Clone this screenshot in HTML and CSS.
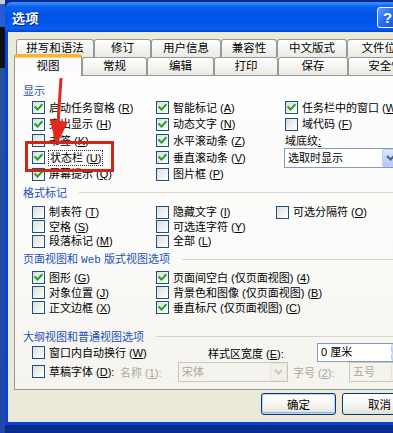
FILE: index.html
```html
<!DOCTYPE html>
<html lang="zh-CN">
<head>
<meta charset="utf-8">
<title>选项</title>
<link rel="stylesheet" href="styles.css">
</head>
<body>
<div class="screen">
  <div class="desk"></div>
  <div class="window">
    <div class="titlebar">
      <span class="title">选项</span>
      <span class="tbtn help">?</span>
      <span class="tbtn close">×</span>
    </div>
    <div class="client">
      <div class="tabs">
        <div class="tabrow back">
          <span class="tab b1">拼写和语法</span>
          <span class="tab b2">修订</span>
          <span class="tab b3">用户信息</span>
          <span class="tab b4">兼容性</span>
          <span class="tab b5">中文版式</span>
          <span class="tab b6">文件位置</span>
        </div>
        <div class="tabrow front">
          <span class="tab sel f1">视图</span>
          <span class="tab f2">常规</span>
          <span class="tab f3">编辑</span>
          <span class="tab f4">打印</span>
          <span class="tab f5">保存</span>
          <span class="tab f6">安全性</span>
        </div>
      </div>

      <div class="panel">
        <div class="hdr s1h"><span>显示</span></div>
        <div class="grid g1">
          <label class="item"><span class="cb on"><svg viewBox="0 0 11 11"><path d="M2.3 5.2l2.2 2.4 4.2-4.6"/></svg></span><span>启动任务窗格 (<u>R</u>)</span></label>
          <label class="item"><span class="cb on"><svg viewBox="0 0 11 11"><path d="M2.3 5.2l2.2 2.4 4.2-4.6"/></svg></span><span>智能标记 (<u>A</u>)</span></label>
          <label class="item"><span class="cb on"><svg viewBox="0 0 11 11"><path d="M2.3 5.2l2.2 2.4 4.2-4.6"/></svg></span><span>任务栏中的窗口 (<u>W</u>)</span></label>

          <label class="item"><span class="cb on"><svg viewBox="0 0 11 11"><path d="M2.3 5.2l2.2 2.4 4.2-4.6"/></svg></span><span>突出显示 (<u>H</u>)</span></label>
          <label class="item"><span class="cb on"><svg viewBox="0 0 11 11"><path d="M2.3 5.2l2.2 2.4 4.2-4.6"/></svg></span><span>动态文字 (<u>N</u>)</span></label>
          <label class="item"><span class="cb"></span><span>域代码 (<u>F</u>)</span></label>

          <label class="item"><span class="cb"></span><span>书签 (<u>K</u>)</span></label>
          <label class="item"><span class="cb on"><svg viewBox="0 0 11 11"><path d="M2.3 5.2l2.2 2.4 4.2-4.6"/></svg></span><span>水平滚动条 (<u>Z</u>)</span></label>
          <span class="item"><span>域底纹<u>:</u></span></span>

          <label class="item"><span class="cb on"><svg viewBox="0 0 11 11"><path d="M2.3 5.2l2.2 2.4 4.2-4.6"/></svg></span><span class="focus">状态栏 (<u>U</u>)</span></label>
          <label class="item"><span class="cb on"><svg viewBox="0 0 11 11"><path d="M2.3 5.2l2.2 2.4 4.2-4.6"/></svg></span><span>垂直滚动条 (<u>V</u>)</span></label>
          <div class="item">
            <div class="combo wide"><span class="val">选取时显示</span><span class="arrow"><svg viewBox="0 0 9 6"><path d="M1 1l3.5 3.5L8 1"/></svg></span></div>
          </div>

          <label class="item"><span class="cb on"><svg viewBox="0 0 11 11"><path d="M2.3 5.2l2.2 2.4 4.2-4.6"/></svg></span><span>屏幕提示 (<u>Q</u>)</span></label>
          <label class="item"><span class="cb"></span><span>图片框 (<u>P</u>)</span></label>
          <span class="item"></span>
        </div>

        <div class="hdr line s2h"><span>格式标记</span></div>
        <div class="grid g2">
          <label class="item"><span class="cb"></span><span>制表符 (<u>T</u>)</span></label>
          <label class="item"><span class="cb"></span><span>隐藏文字 (<u>I</u>)</span></label>
          <label class="item"><span class="cb"></span><span>可选分隔符 (<u>O</u>)</span></label>
          <label class="item"><span class="cb"></span><span>空格 (<u>S</u>)</span></label>
          <label class="item"><span class="cb"></span><span>可选连字符 (<u>Y</u>)</span></label>
          <span class="item"></span>
          <label class="item"><span class="cb"></span><span>段落标记 (<u>M</u>)</span></label>
          <label class="item"><span class="cb"></span><span>全部 (<u>L</u>)</span></label>
          <span class="item"></span>
        </div>

        <div class="hdr line s3h"><span>页面视图和 <span class="mono">Web</span> 版式视图选项</span></div>
        <div class="grid g3">
          <label class="item"><span class="cb on"><svg viewBox="0 0 11 11"><path d="M2.3 5.2l2.2 2.4 4.2-4.6"/></svg></span><span>图形 (<u>G</u>)</span></label>
          <label class="item"><span class="cb on"><svg viewBox="0 0 11 11"><path d="M2.3 5.2l2.2 2.4 4.2-4.6"/></svg></span><span>页面间空白 (仅页面视图) (<u>4</u>)</span></label>
          <label class="item"><span class="cb"></span><span>对象位置 (<u>J</u>)</span></label>
          <label class="item"><span class="cb"></span><span>背景色和图像 (仅页面视图) (<u>B</u>)</span></label>
          <label class="item"><span class="cb"></span><span>正文边框 (<u>X</u>)</span></label>
          <label class="item"><span class="cb on"><svg viewBox="0 0 11 11"><path d="M2.3 5.2l2.2 2.4 4.2-4.6"/></svg></span><span>垂直标尺 (仅页面视图) (<u>C</u>)</span></label>
        </div>

        <div class="hdr line s4h"><span>大纲视图和普通视图选项</span></div>
        <div class="row r1">
          <label class="item w-wrap"><span class="cb"></span><span>窗口内自动换行 (<u>W</u>)</span></label>
          <span class="lbl w-style">样式区宽度 (<u>E</u>):</span>
          <div class="spin"><span class="val">0 厘米</span><span class="btns"><span class="sb"><svg viewBox="0 0 7 4"><path d="M0.5 3.5L3.5 0.5 6.5 3.5"/></svg></span><span class="sb"><svg viewBox="0 0 7 4"><path d="M0.5 0.5L3.5 3.5 6.5 0.5"/></svg></span></span></div>
        </div>
        <div class="row r2">
          <label class="item w-draft"><span class="cb"></span><span>草稿字体 (<u>D</u>):</span></label>
          <span class="lbl dis w-name">名称 (<u>1</u>):</span>
          <div class="combo dis font"><span class="val">宋体</span><span class="arrow"><svg viewBox="0 0 9 6"><path d="M1 1l3.5 3.5L8 1"/></svg></span></div>
          <span class="lbl dis w-size">字号 (<u>2</u>):</span>
          <div class="combo dis size"><span class="val">五号</span><span class="arrow"><svg viewBox="0 0 9 6"><path d="M1 1l3.5 3.5L8 1"/></svg></span></div>
        </div>
      </div>

      <div class="buttons">
        <button class="btn def">确定</button>
        <button class="btn">取消</button>
      </div>
    </div>
  </div>

  <svg class="annot" viewBox="0 0 393 433" width="393" height="433">
    <path class="arrow-line" d="M61 78 L58 124"/>
    <polygon class="arrow-head" points="50,119 68,122 56,146"/>
    <rect class="redbox" x="26.5" y="142.5" width="86" height="28"/>
  </svg>
</div>
</body>
</html>
```

FILE: styles.css
```css
* { box-sizing: border-box; margin: 0; padding: 0; }
html, body { width: 393px; height: 433px; overflow: hidden; }
body {
  font-family: "Liberation Sans", "Noto Sans CJK SC", sans-serif;
  font-size: 11px;
  color: #000;
  background: #0B2B8C;
}
u { text-decoration: underline; text-underline-offset: 1px; }

.screen {
  position: relative;
  display: flex;
  width: 393px;
  height: 433px;
  overflow: hidden;
  background: #0B2B8C;
}
.desk {
  flex: 0 0 5px;
  height: 433px;
  background: linear-gradient(to bottom, #c9ccd6 0, #c9ccd6 4px, #2d5bd0 4px, #2d5bd0 27px, #111 27px, #111 68px, #2a4f9c 68px, #1f47a8 100%);
}
.window {
  flex: 0 0 418px;
  margin-top: 2px;
  height: 423px;
  display: flex;
  flex-direction: column;
  background: #0842D6;
  border-radius: 7px 7px 0 0;
}
.titlebar {
  height: 30px;
  flex: none;
  display: flex;
  align-items: center;
  padding: 0 5px 0 7px;
  border-radius: 7px 7px 0 0;
  background: linear-gradient(to bottom, #3d8ff8 0, #2a80fc 2px, #0b60ee 5px, #0054e6 40%, #0157ec 75%, #0a5ff1 88%, #0046cf 100%);
}
.title {
  color: #fff;
  font-family: "Noto Sans CJK SC", sans-serif;
  font-weight: bold;
  font-size: 13px;
  letter-spacing: 0.5px;
  text-shadow: 1px 1px 0 #0a1f86;
  flex: 1;
}
.tbtn {
  width: 21px;
  height: 21px;
  margin-left: 2px;
  border: 1px solid #fff;
  border-radius: 3px;
  color: #fff;
  font-family: "Liberation Sans", sans-serif;
  font-weight: bold;
  font-size: 15px;
  line-height: 19px;
  text-align: center;
  background: linear-gradient(135deg, #5ea0ff 0%, #2a6fef 45%, #1a55dd 100%);
}
.close { background: linear-gradient(135deg, #f0a08a 0%, #e0502c 50%, #c43a14 100%); }

.client {
  flex: 1;
  margin: 0 3px 3px 3px;
  background: #ECE9D8;
  display: flex;
  flex-direction: column;
}

/* tabs */
.tabs { padding-top: 7px; }
.tabrow { display: flex; height: 18px; }
.tabrow.back { margin-left: 8px; }
.tabrow.front { margin-left: 6px; align-items: flex-end; }
.tab {
  flex: none;
  height: 18px;
  border: 1px solid #919B9C;
  border-bottom: none;
  border-radius: 3px 3px 0 0;
  background: linear-gradient(to bottom, #ffffff 0%, #f3f2ee 60%, #ebe9e0 100%);
  font-size: 11.5px;
  line-height: 16px;
  text-align: center;
  white-space: nowrap;
}
.tab.sel {
  position: relative;
  z-index: 2;
  height: 22px;
  margin-bottom: -1px;
  border-top: 3px solid #f7b13c;
  box-shadow: inset 0 1px 0 #ffd46f;
  background: #fcfcfe;
  line-height: 18px;
}
.b1 { width: 78px; } .b2 { width: 57px; } .b3 { width: 70px; }
.b4 { width: 56px; } .b5 { width: 70px; } .b6 { width: 75px; }
.f1 { width: 68px; } .f2 { width: 65px; } .f3 { width: 67px; }
.f4 { width: 64px; } .f5 { width: 70px; } .f6 { width: 75px; }

/* panel */
.panel {
  margin-left: 6px;
  width: 400px;
  height: 315px;
  flex: none;
  border: 1px solid #919B9C;
  background: linear-gradient(to bottom, #fdfdfe 0%, #fafaf8 60%, #f4f3ee 100%);
  padding: 7px 0 0 8px;
  display: flex;
  flex-direction: column;
}
.hdr {
  height: 16px;
  line-height: 16px;
  display: flex;
  align-items: center;
  color: #1E50B4;
  white-space: nowrap;
  flex: none;
}
.hdr.line::after {
  content: "";
  flex: 1;
  height: 1px;
  margin-left: 12px;
  background: #d6d5c8;
}
.mono { font-family: "Liberation Mono", monospace; font-size: 11px; }
.s2h { margin-top: 2.5px; }
.s3h { margin-top: 3.5px; }
.s4h { margin-top: 13.5px; }

.grid { display: grid; margin-left: 9px; flex: none; }
.g1 { grid-template-columns: 124px 129px 140px; grid-auto-rows: 16.6px; margin-top: 0.5px; }
.g2 { grid-template-columns: 124px 120px 140px; grid-auto-rows: 14.5px; margin-top: 4px; }
.g3 { grid-template-columns: 124px 260px; grid-auto-rows: 15px; margin-top: 2.5px; }

.item {
  display: flex;
  align-items: center;
  gap: 4px;
  white-space: nowrap;
  line-height: 14px;
}
.cb {
  flex: none;
  width: 13px;
  height: 13px;
  border: 1px solid #1C5180;
  background: linear-gradient(135deg, #dcdcd7 0%, #f2f2ef 60%, #ffffff 100%);
  display: flex;
  align-items: center;
  justify-content: center;
}
.cb svg { width: 11px; height: 11px; display: block; }
.cb svg path { fill: none; stroke: #21A121; stroke-width: 2; stroke-linecap: square; }
.focus { outline: 1px dotted #333; outline-offset: 0px; padding: 0 1px; }

/* combo */
.combo {
  display: flex;
  height: 20px;
  border: 1px solid #7F9DB9;
  background: #fff;
  flex: none;
}
.combo.wide { width: 116px; margin-left: -1px; }
.combo .val { flex: 1; padding-left: 3px; line-height: 18px; white-space: nowrap; }
.combo .arrow {
  width: 17px;
  height: 18px;
  border: 1px solid #bccdf5;
  border-radius: 2px;
  background: linear-gradient(to bottom, #dfe8fd 0%, #c6d6fb 50%, #b3c8f6 100%);
  display: flex;
  align-items: center;
  justify-content: center;
}
.combo .arrow svg { width: 9px; height: 6px; }
.combo .arrow path { fill: none; stroke: #4d6185; stroke-width: 2; }
.combo.dis { border-color: #c9c7ba; background: #f4f3ee; color: #aca899; }
.combo.dis .arrow { border-color: #e8e6dd; background: #f1f0ea; }
.combo.dis .arrow path { stroke: #c9c7ba; }
.combo.font { width: 110px; }
.combo.size { width: 60px; }

/* rows in last section */
.row { display: flex; align-items: center; margin-left: 9px; flex: none; }
.r1 { height: 16px; }
.r2 { height: 20px; margin-top: 1px; }
.lbl { white-space: nowrap; flex: none; }
.dis { color: #aca899; }
.w-wrap { width: 176px; }
.w-style { width: 109px; }
.w-draft { width: 88px; }
.w-name { width: 58px; }
.w-size { width: 56px; margin-left: 5px; }
.spin {
  display: flex;
  width: 90px;
  height: 19px;
  border: 1px solid #7F9DB9;
  background: #fff;
  flex: none;
}
.spin .val { flex: 1; padding-left: 3px; line-height: 17px; white-space: pre; }
.spin .btns { width: 15px; display: flex; flex-direction: column; }
.spin .sb {
  flex: 1;
  border: 1px solid #bccdf5;
  border-radius: 2px;
  background: linear-gradient(to bottom, #dfe8fd, #b9cdf7);
  display: flex;
  align-items: center;
  justify-content: center;
}
.spin .sb svg { width: 7px; height: 4px; }
.spin .sb path { fill: none; stroke: #4d6185; stroke-width: 1.5; }

/* buttons */
.buttons {
  display: flex;
  gap: 6px;
  padding-left: 253px;
  margin-top: 3px;
  flex: none;
}
.btn {
  width: 75px;
  height: 22px;
  border: 1px solid #003C74;
  border-radius: 3px;
  background: linear-gradient(to bottom, #ffffff 0%, #f4f4f0 60%, #e3e1d6 100%);
  font-family: "Noto Sans CJK SC", sans-serif;
  font-size: 11.5px;
  color: #000;
}
.btn.def { box-shadow: inset 0 0 0 1px #c0d2f6, inset 0 -1px 0 1px #98b4ec; }

/* annotation overlay */
.annot { position: absolute; left: 0; top: 0; pointer-events: none; }
.arrow-line { stroke: #e02a1e; stroke-width: 3; fill: none; }
.arrow-head { fill: #e02a1e; }
.redbox { fill: none; stroke: #d2231b; stroke-width: 3; }
```
